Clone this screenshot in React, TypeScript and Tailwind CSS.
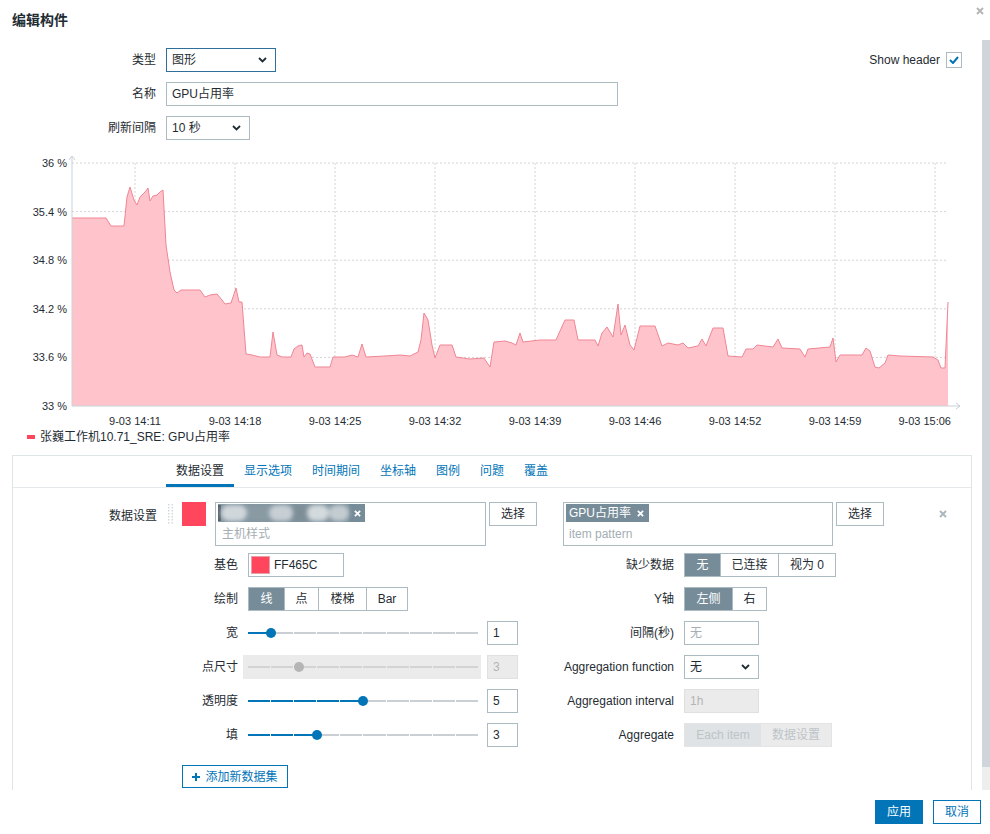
import { FC, ReactNode } from 'react';

const points: [number, number][] = [
  [72, 218], [106, 218], [111, 226], [124, 226], [127, 197], [130, 187], [134, 200], [137, 205],
  [140, 197], [145, 192], [148, 188], [150, 201], [153, 196], [157, 195], [160, 192], [163, 190],
  [166, 245], [170, 272], [174, 290], [177, 293], [181, 290], [200, 290], [205, 297], [210, 295],
  [217, 294], [222, 300], [225, 304], [231, 303], [236, 288], [239, 302], [242, 302], [246, 354],
  [252, 355], [260, 357], [270, 357], [273, 332], [277, 355], [282, 357], [291, 357], [294, 349],
  [298, 346], [302, 345], [304, 357], [307, 353], [310, 354], [315, 367], [330, 367], [333, 357],
  [345, 357], [352, 355], [358, 357], [362, 344], [366, 357], [385, 356], [400, 355], [410, 356],
  [418, 352], [421, 340], [424, 313], [428, 320], [432, 345], [435, 358], [440, 345], [452, 345],
  [456, 357], [470, 359], [484, 358], [490, 367], [494, 342], [505, 341], [512, 343], [516, 345],
  [520, 333], [523, 342], [540, 340], [556, 340], [560, 331], [565, 320], [574, 320], [578, 340],
  [595, 340], [598, 346], [602, 333], [607, 327], [613, 337], [618, 304], [621, 335], [625, 325],
  [630, 345], [634, 350], [640, 326], [655, 326], [662, 346], [668, 343], [678, 345], [683, 343],
  [688, 348], [698, 346], [702, 339], [706, 346], [713, 328], [723, 328], [728, 356], [742, 357],
  [746, 349], [753, 349], [757, 345], [773, 347], [778, 339], [782, 348], [800, 349], [805, 357],
  [808, 349], [830, 347], [833, 338], [836, 362], [840, 355], [862, 355], [866, 348], [870, 351],
  [875, 367], [879, 368], [885, 363], [888, 355], [900, 356], [933, 357], [938, 360], [941, 368],
  [945, 368], [948, 302]
];

const yTicks: [number, string][] = [
  [163, '36 %'], [211.6, '35.4 %'], [260.2, '34.8 %'], [308.8, '34.2 %'], [357.4, '33.6 %'], [406, '33 %']
];

const xTicks = [
  '9-03 14:11', '9-03 14:18', '9-03 14:25', '9-03 14:32', '9-03 14:39',
  '9-03 14:46', '9-03 14:52', '9-03 14:59', '9-03 15:06'
];

const Chevron: FC = () => (
  <svg width="9" height="6" viewBox="0 0 9 6" className="shrink-0">
    <path d="M1 1l3.5 3.5L8 1" fill="none" stroke="#1f2c33" strokeWidth="1.8" />
  </svg>
);

const Cross: FC<{ color: string; size?: number }> = ({ color, size = 7 }) => (
  <svg width={size} height={size} viewBox="0 0 8 8" className="shrink-0">
    <path d="M1 1l6 6M7 1l-6 6" stroke={color} strokeWidth="2" />
  </svg>
);

const Select: FC<{ value: string; className: string }> = ({ value, className }) => (
  <div className={`flex h-6 items-center justify-between border bg-white pl-[5px] pr-[8px] ${className}`}>
    <span>{value}</span>
    <Chevron />
  </div>
);

interface SegItem {
  label: string;
  className: string;
}

const Segmented: FC<{ items: SegItem[]; active: number; disabled?: boolean }> = ({ items, active, disabled }) => (
  <div className={`flex h-6 border ${disabled ? 'border-[#e4e4e4]' : 'border-[#acbbc2]'}`}>
    {items.map((item, i) => {
      let tone = 'bg-white text-[#1f2c33]';
      if (disabled) tone = i === active ? 'bg-[#dfe3e5] text-[#bcc4c8]' : 'bg-[#ebebeb] text-[#bcc4c8]';
      else if (i === active) tone = 'bg-[#768d99] text-white';
      return (
        <div
          key={item.label}
          className={`flex items-center justify-center ${i > 0 && !disabled ? 'border-l border-[#acbbc2]' : ''} ${tone} ${item.className}`}
        >
          {item.label}
        </div>
      );
    })}
  </div>
);

const Slider: FC<{ value: number; min?: number; max?: number; disabled?: boolean }> = ({
  value,
  min = 0,
  max = 10,
  disabled
}) => {
  const pos = ((value - min) / (max - min)) * 230;
  return (
    <div className="relative flex h-[12px] w-[230px] items-center">
      <div className="flex h-[2px] w-full gap-[1px]">
        {Array.from({ length: 10 }).map((_, i) => (
          <div
            key={i}
            className={`h-full flex-1 ${
              disabled ? 'bg-[#d3d3d3]' : (i + 1) * 23 <= pos + 1 ? 'bg-[#0275b8]' : 'bg-[#c9cfd3]'
            }`}
          />
        ))}
      </div>
      <div
        className={`absolute top-[1px] h-[10px] w-[10px] rounded-full ${disabled ? 'bg-[#b5b5b5]' : 'bg-[#0275b8]'}`}
        style={{ left: pos - 5 }}
      />
    </div>
  );
};

const NumBox: FC<{ value: string; disabled?: boolean }> = ({ value, disabled }) => (
  <div
    className={`flex h-6 w-[31px] items-center border pl-[5px] ${
      disabled ? 'border-[#e0e0e0] bg-[#ebebeb] text-[#b4b4b4]' : 'border-[#acbbc2] bg-white'
    }`}
  >
    {value}
  </div>
);

const Row: FC<{ left: string; leftCtl: ReactNode; right: string; rightCtl: ReactNode }> = ({
  left,
  leftCtl,
  right,
  rightCtl
}) => (
  <div className="flex h-6 items-center">
    <div className="flex w-[505px] items-center">
      <span className="w-[225px] text-right">{left}</span>
      <div className="ml-[10px] flex items-center">{leftCtl}</div>
    </div>
    <div className="flex items-center">
      <span className="w-[156px] text-right">{right}</span>
      <div className="ml-[10px] flex items-center">{rightCtl}</div>
    </div>
  </div>
);

const Chart: FC = () => {
  const line = points.map(([x, y]) => `${x},${y}`).join(' ');
  const area = `72,406 ${line} 948,406`;
  return (
    <svg width="982" height="285" viewBox="0 145 982 285" className="mt-[5px] block">
      {yTicks.slice(0, 5).map(([y]) => (
        <line key={y} x1="72" x2="948" y1={y} y2={y} stroke="#d4d4d4" strokeDasharray="2 2" />
      ))}
      {xTicks.map((t, i) => (
        <line key={t} x1={135 + 100 * i} x2={135 + 100 * i} y1="163" y2="406" stroke="#d4d4d4" strokeDasharray="2 2" />
      ))}
      <polygon points={area} fill="#ffc4cb" />
      <polyline points={line} fill="none" stroke="#f08594" strokeWidth="1" />
      <line x1="72" x2="72" y1="156" y2="406" stroke="#c8d1d8" />
      <line x1="72" x2="960" y1="406" y2="406" stroke="#c8d1d8" />
      <path d="M69 160l3-4 3 4" fill="none" stroke="#c8d1d8" />
      <path d="M956 403l4 3-4 3" fill="none" stroke="#c8d1d8" />
      {yTicks.map(([y, t]) => (
        <text key={t} x="67" y={y + 4} textAnchor="end" fontSize="11" fill="#1f2c33">
          {t}
        </text>
      ))}
      {xTicks.map((t, i) =>
        i === xTicks.length - 1 ? (
          <text key={t} x="951" y="425" textAnchor="end" fontSize="11" fill="#1f2c33">
            {t}
          </text>
        ) : (
          <text key={t} x={135 + 100 * i} y="425" textAnchor="middle" fontSize="11" fill="#1f2c33">
            {t}
          </text>
        )
      )}
    </svg>
  );
};

const Grip: FC = () => (
  <svg width="6" height="20" viewBox="0 0 6 20" className="shrink-0">
    {[1, 4, 7, 10, 13, 16, 19].map((y) => (
      <g key={y}>
        <rect x="0" y={y - 1} width="1.5" height="1.5" fill="#d3d9dd" />
        <rect x="3.5" y={y - 1} width="1.5" height="1.5" fill="#d3d9dd" />
      </g>
    ))}
  </svg>
);

const tabs = ['数据设置', '显示选项', '时间期间', '坐标轴', '图例', '问题', '覆盖'];

const App: FC = () => {
  return (
    <div className="flex h-[834px] w-[990px] flex-col bg-white font-['Liberation_Sans','Noto_Sans_CJK_SC',sans-serif] text-[12px] text-[#1f2c33]">
      <div className="flex h-10 shrink-0 items-center justify-between pl-3 pr-[6px]">
        <span className="text-[14px] font-bold">编辑构件</span>
        <div className="mb-[18px]">
          <Cross color="#b6b6b6" size={8} />
        </div>
      </div>

      <div className="flex h-[750px] shrink-0">
        <div className="w-[982px] overflow-hidden">
          <div className="flex flex-col gap-[10px] pt-2">
            <div className="flex h-6 items-center">
              <span className="w-[156px] text-right">类型</span>
              <Select value="图形" className="ml-[10px] w-[110px] border-[#2f6f99]" />
              <div className="ml-auto mr-5 flex items-center">
                <span>Show header</span>
                <div className="ml-[6px] flex h-4 w-4 items-center justify-center border border-[#acbbc2] bg-white">
                  <svg width="10" height="8" viewBox="0 0 10 8">
                    <path d="M1 4l3 3 5-6" fill="none" stroke="#0275b8" strokeWidth="2" />
                  </svg>
                </div>
              </div>
            </div>
            <div className="flex h-6 items-center">
              <span className="w-[156px] text-right">名称</span>
              <div className="ml-[10px] flex h-6 w-[452px] items-center border border-[#acbbc2] pl-[5px]">GPU占用率</div>
            </div>
            <div className="flex h-6 items-center">
              <span className="w-[156px] text-right">刷新间隔</span>
              <Select value="10 秒" className="ml-[10px] w-[84px] border-[#acbbc2]" />
            </div>
          </div>

          <Chart />

          <div className="flex h-[14px] items-center pl-[27px]">
            <div className="h-[4px] w-[8px] bg-[#ff465c]" />
            <span className="ml-[5px]">张巍工作机10.71_SRE: GPU占用率</span>
          </div>

          <div className="ml-3 mt-[11px] h-[400px] w-[960px] border border-[#dfe4e7]">
            <div className="flex h-[32px] border-b border-[#e5e9eb] pl-[153px]">
              {tabs.map((t, i) => (
                <div
                  key={t}
                  className={`flex h-[31px] items-center border-b-[3px] px-[10px] pt-[2px] ${
                    i === 0 ? 'border-[#0275b8] text-[#1f2c33]' : 'border-transparent text-[#0275b8]'
                  }`}
                >
                  {t}
                </div>
              ))}
            </div>

            <div className="flex pt-[14px]">
              <span className="mt-[5px] w-[144px] text-right">数据设置</span>
              <div className="ml-[11px] mt-[2px]">
                <Grip />
              </div>
              <div className="ml-[8px] h-6 w-6 bg-[#ff465c]" />
              <div className="ml-[9px] flex h-[44px] w-[271px] flex-col border border-[#acbbc2] pl-[2px] pt-[1px]">
                <div className="flex h-[18px] w-[147px] items-center overflow-hidden bg-[#8395a0]">
                  <div className="h-[16px] w-[3px] bg-[#56656d]" />
                  <div className="flex h-full flex-1 items-center blur-[2px]">
                    <div className="h-[16px] w-[26px] rounded-full bg-[#d0d7db]" />
                    <div className="h-[16px] w-[22px] bg-[#8a9aa3]" />
                    <div className="h-[16px] w-[24px] rounded-full bg-[#c7cfd4]" />
                    <div className="h-[16px] w-[14px] bg-[#7d8e98]" />
                    <div className="h-[16px] w-[22px] rounded-full bg-[#d3dadd]" />
                    <div className="h-[16px] w-[20px] rounded-full bg-[#c3ccd1]" />
                  </div>
                  <div className="flex h-full w-[16px] items-center justify-center bg-[#768d99]">
                    <Cross color="#ffffff" />
                  </div>
                </div>
                <span className="mt-[3px] pl-[4px] text-[#a5aeb3]">主机样式</span>
              </div>
              <div className="ml-[3px] flex h-6 w-[48px] items-center justify-center border border-[#acbbc2]">选择</div>
              <div className="ml-[26px] flex h-[44px] w-[270px] flex-col border border-[#acbbc2] pl-[2px] pt-[1px]">
                <div className="flex h-[18px] w-fit items-center gap-[6px] bg-[#768d99] pl-[3px] pr-[5px] text-white">
                  <span>GPU占用率</span>
                  <Cross color="#ffffff" />
                </div>
                <span className="mt-[3px] pl-[3px] text-[#a5aeb3]">item pattern</span>
              </div>
              <div className="ml-[3px] flex h-6 w-[48px] items-center justify-center border border-[#acbbc2]">选择</div>
              <div className="ml-[55px] mt-[8px]">
                <Cross color="#acb7be" size={8} />
              </div>
            </div>

            <div className="mt-[7px] flex flex-col gap-[10px]">
              <Row
                left="基色"
                leftCtl={
                  <div className="flex h-6 w-[96px] items-center border border-[#acbbc2] pl-[2px]">
                    <div className="h-[18px] w-[19px] border border-[#e8a0a8] bg-[#ff465c]" />
                    <span className="ml-[4px]">FF465C</span>
                  </div>
                }
                right="缺少数据"
                rightCtl={
                  <Segmented
                    active={0}
                    items={[
                      { label: '无', className: 'w-[35px]' },
                      { label: '已连接', className: 'w-[58px]' },
                      { label: '视为 0', className: 'w-[57px]' }
                    ]}
                  />
                }
              />
              <Row
                left="绘制"
                leftCtl={
                  <Segmented
                    active={0}
                    items={[
                      { label: '线', className: 'w-[35px]' },
                      { label: '点', className: 'w-[34px]' },
                      { label: '楼梯', className: 'w-[48px]' },
                      { label: 'Bar', className: 'w-[41px]' }
                    ]}
                  />
                }
                right="Y轴"
                rightCtl={
                  <Segmented
                    active={0}
                    items={[
                      { label: '左侧', className: 'w-[47px]' },
                      { label: '右', className: 'w-[34px]' }
                    ]}
                  />
                }
              />
              <Row
                left="宽"
                leftCtl={
                  <>
                    <Slider value={1} />
                    <div className="ml-[9px]">
                      <NumBox value="1" />
                    </div>
                  </>
                }
                right="间隔(秒)"
                rightCtl={
                  <div className="flex h-6 w-[75px] items-center border border-[#acbbc2] pl-[5px] text-[#a5aeb3]">无</div>
                }
              />
              <Row
                left="点尺寸"
                leftCtl={
                  <>
                    <div className="-ml-[5px] flex h-6 w-[238px] items-center bg-[#ebebeb] pl-[5px]">
                      <Slider value={3} min={1} max={10} disabled />
                    </div>
                    <div className="ml-[6px]">
                      <NumBox value="3" disabled />
                    </div>
                  </>
                }
                right="Aggregation function"
                rightCtl={<Select value="无" className="w-[75px] border-[#acbbc2]" />}
              />
              <Row
                left="透明度"
                leftCtl={
                  <>
                    <Slider value={5} />
                    <div className="ml-[9px]">
                      <NumBox value="5" />
                    </div>
                  </>
                }
                right="Aggregation interval"
                rightCtl={
                  <div className="flex h-6 w-[75px] items-center border border-[#e0e0e0] bg-[#ebebeb] pl-[5px] text-[#b4b4b4]">
                    1h
                  </div>
                }
              />
              <Row
                left="填"
                leftCtl={
                  <>
                    <Slider value={3} />
                    <div className="ml-[9px]">
                      <NumBox value="3" />
                    </div>
                  </>
                }
                right="Aggregate"
                rightCtl={
                  <Segmented
                    active={0}
                    disabled
                    items={[
                      { label: 'Each item', className: 'w-[76px]' },
                      { label: '数据设置', className: 'w-[70px]' }
                    ]}
                  />
                }
              />
            </div>

            <div className="ml-[169px] mt-[18px] flex h-[23px] w-[106px] items-center justify-center gap-[5px] border border-[#0275b8] text-[#0275b8]">
              <svg width="8" height="8" viewBox="0 0 8 8">
                <path d="M4 0v8M0 4h8" stroke="#0275b8" strokeWidth="2" />
              </svg>
              <span>添加新数据集</span>
            </div>
          </div>
        </div>
        <div className="flex w-2 flex-col">
          <div className="h-[727px] bg-[#cfd5da]" />
          <div className="flex-1 bg-[#eeeeee]" />
        </div>
      </div>

      <div className="flex h-[44px] shrink-0 items-center justify-end gap-[10px] pr-[9px]">
        <button type="button" className="h-6 w-[48px] bg-[#0275b8] text-white">
          应用
        </button>
        <button type="button" className="h-6 w-[48px] border border-[#0275b8] bg-white text-[#0275b8]">
          取消
        </button>
      </div>
    </div>
  );
};

export default App;
